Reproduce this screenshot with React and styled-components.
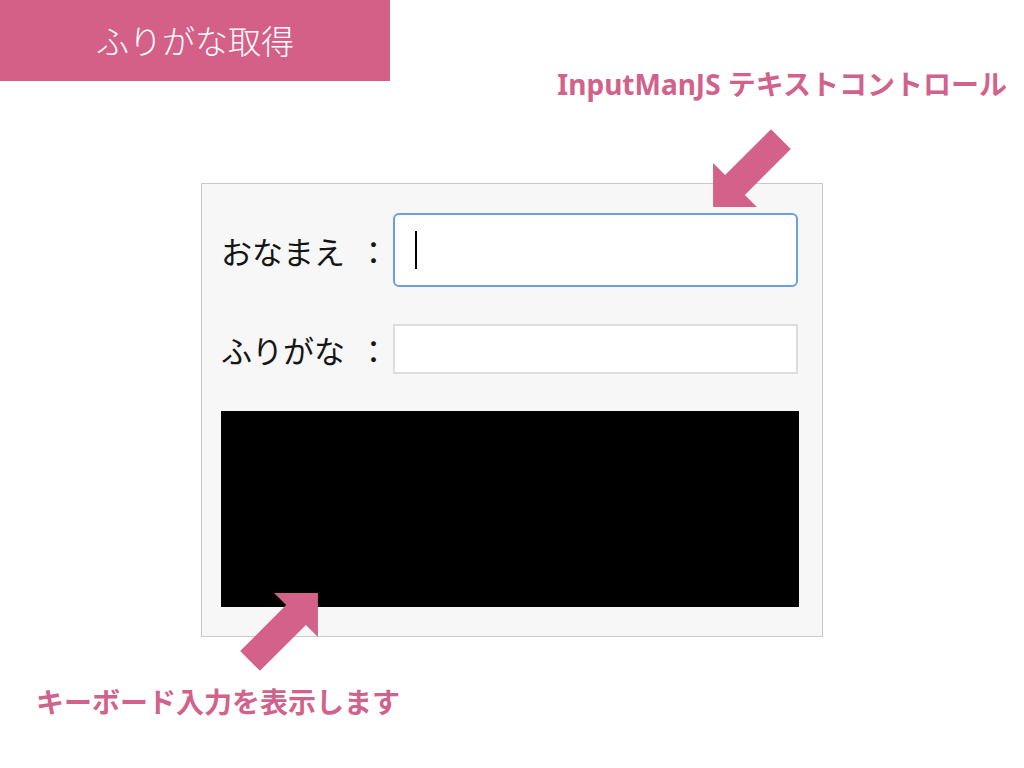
import React from "react"
import styled, {createGlobalStyle} from "styled-components"

const GlobalStyle = createGlobalStyle`
body{
  margin:0;
  background:#ffffff;
  font-family:"Noto Sans","Noto Sans CJK JP",sans-serif;
}
`
const Page = styled.div`
position:relative;
width:1024px;
height:768px;
overflow:hidden;
background:#ffffff;
`
const TopRow = styled.div`
display:flex;
justify-content:space-between;
align-items:flex-start;
`
const TitleBar = styled.div`
width:390px;
height:81px;
background:#d45f87;
color:#ffffff;
font-family:"Noto Sans CJK JP",sans-serif;
font-weight:300;
font-size:33px;
line-height:81px;
padding-left:96px;
box-sizing:border-box;
`
const Callout = styled.div`
color:#d1628b;
font-family:"Noto Sans","Noto Sans CJK JP",sans-serif;
font-weight:700;
font-size:28px;
line-height:34px;
white-space:nowrap;
margin-top:${p => p.top}px;
margin-right:${p => p.right || 0}px;
margin-left:${p => p.left || 0}px;
`
const Panel = styled.div`
width:622px;
box-sizing:border-box;
margin:82px auto 0;
background:#f7f7f7;
border:1px solid #c9c9c9;
padding:29px 24px 29px 19px;
display:grid;
grid-template-columns:172px 1fr;
row-gap:37px;
align-items:center;
`
const Label = styled.div`
display:flex;
align-items:center;
font-family:"Noto Sans CJK JP",sans-serif;
font-size:31px;
color:#151515;
white-space:nowrap;
`
const Colon = styled.span`
margin-left:13px;
`
const TextBox = styled.div`
height:${p => p.h}px;
box-sizing:border-box;
background:#ffffff;
border:2px solid ${p => p.focused ? "#6c9fdf" : "#dddddd"};
border-radius:${p => p.focused ? 6 : 0}px;
display:flex;
align-items:center;
padding-left:20px;
`
const Caret = styled.div`
width:2px;
height:38px;
background:#000000;
`
const Keyboard = styled.div`
grid-column:1 / 3;
height:196px;
background:#000000;
margin-right:-1px;
`
const ArrowSvg = styled.svg`
position:absolute;
width:120px;
height:120px;
`

function Arrow({cx, cy, angle}) {
  return (
    <ArrowSvg viewBox="-60 -60 120 120" style={{left: cx - 60, top: cy - 60}}>
      <polygon
        points="-48,-14 17,-14 17,-31 48,0 17,31 17,14 -48,14"
        fill="#d4618a"
        transform={`rotate(${angle})`}
      />
    </ArrowSvg>
  )
}

export default function App() {
  return (
    <Page>
      <GlobalStyle/>
      <TopRow>
        <TitleBar>ふりがな取得</TitleBar>
        <Callout top={67} right={17}>InputManJS テキストコントロール</Callout>
      </TopRow>
      <Panel>
        <Label>おなまえ<Colon>：</Colon></Label>
        <TextBox focused h={74}><Caret/></TextBox>
        <Label>ふりがな<Colon>：</Colon></Label>
        <TextBox h={50}/>
        <Keyboard/>
      </Panel>
      <Callout top={48} left={36}>キーボード入力を表示します</Callout>
      <Arrow cx={746.5} cy={172.5} angle={135}/>
      <Arrow cx={284} cy={626.5} angle={-45}/>
    </Page>
  )
}
